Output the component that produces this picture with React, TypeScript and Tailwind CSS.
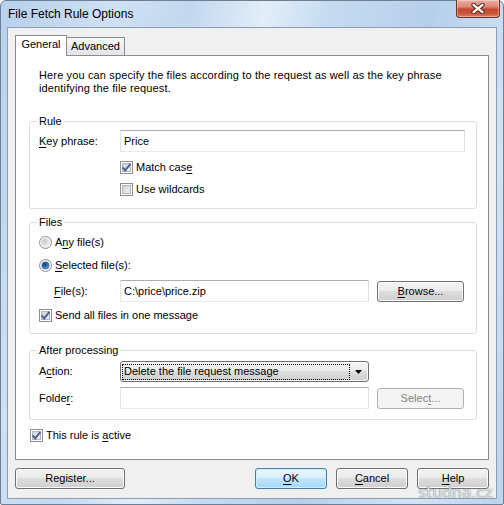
import React from 'react';

const FONT = "font-['Liberation_Sans',Arial,sans-serif]";

const btn =
  'flex items-center justify-center rounded-[3px] border border-[#707070] bg-[linear-gradient(to_bottom,#f2f2f2_0%,#ebebeb_50%,#dddddd_50%,#cfcfcf_100%)] shadow-[inset_0_0_0_1px_#fbfbfb]';

const field =
  'flex items-center border border-[#abadb3] border-l-[#e2e3ea] border-r-[#dbdfe6] border-b-[#e3e9ef] bg-white pl-[3px]';

function Key({ children }: { children: React.ReactNode }) {
  return <span className="underline underline-offset-[2px]">{children}</span>;
}

// shared gradients for the little drawn controls
function Defs() {
  return (
    <svg width="0" height="0" className="absolute">
      <defs>
        <linearGradient id="cbFill" x1="0" y1="0" x2="1" y2="1">
          <stop offset="0" stopColor="#c9ced6" />
          <stop offset="1" stopColor="#f6f7f8" />
        </linearGradient>
        <radialGradient id="rdFill" cx="0.3" cy="0.3" r="0.9">
          <stop offset="0" stopColor="#c4c8cd" />
          <stop offset="1" stopColor="#f5f5f5" />
        </radialGradient>
        <radialGradient id="rdDot" cx="0.4" cy="0.35" r="0.7">
          <stop offset="0" stopColor="#0e3f78" />
          <stop offset="0.6" stopColor="#2e78be" />
          <stop offset="1" stopColor="#7cc0ee" />
        </radialGradient>
      </defs>
    </svg>
  );
}

function CheckBox({ checked }: { checked?: boolean }) {
  return (
    <svg width="13" height="13" viewBox="0 0 13 13" className="shrink-0">
      <rect x="0.5" y="0.5" width="12" height="12" fill="#fff" stroke="#8e8f8f" />
      <rect x="2.5" y="2.5" width="8" height="8" fill="url(#cbFill)" stroke="#b0b5bc" />
      {checked && (
        <path d="M2.6 6.3 L5.2 9.4 L10.4 2.8" fill="none" stroke="#4a6190" strokeWidth="1.9" />
      )}
    </svg>
  );
}

function Radio({ selected }: { selected?: boolean }) {
  return (
    <svg width="13" height="13" viewBox="0 0 13 13" className="shrink-0">
      <circle cx="6.5" cy="6.5" r="6" fill="#f3f3f3" stroke="#8e8f8f" />
      <circle cx="6.5" cy="6.5" r="4.2" fill="url(#rdFill)" />
      {selected && <circle cx="6.5" cy="6.5" r="3.6" fill="url(#rdDot)" stroke="#1b4d86" strokeWidth="0.6" />}
    </svg>
  );
}

function Group({ title, className, children }: { title: string; className?: string; children: React.ReactNode }) {
  return (
    <fieldset className={`ml-[13px] w-[448px] rounded-[3px] border border-[#d5dfe5] ${className ?? ''}`}>
      <legend className="ml-[7px] px-[2px] leading-[13px]">{title}</legend>
      <div className="flex flex-col pl-[9px]">{children}</div>
    </fieldset>
  );
}

function CloseButton() {
  return (
    <div className="ml-auto mr-[3px] mt-[-1px] flex h-[18px] w-[44px] items-center justify-center rounded-b-[4px] border border-t-0 border-[#6e3128] bg-[linear-gradient(to_bottom,#eab0a2_0%,#dc8675_40%,#c4462c_55%,#cc563a_80%,#de7f63_100%)] shadow-[inset_0_0_0_1px_rgba(255,255,255,0.35)]">
      <svg width="14" height="11" viewBox="0 0 14 11">
        <path d="M2.5 1.8L11.5 9.2M11.5 1.8L2.5 9.2" stroke="#4d2019" strokeWidth="4.2" strokeLinecap="round" />
        <path d="M2.5 1.8L11.5 9.2M11.5 1.8L2.5 9.2" stroke="#ffffff" strokeWidth="2.3" strokeLinecap="round" />
      </svg>
    </div>
  );
}

export default function App() {
  return (
    <div className={`${FONT} relative h-[505px] w-[504px] overflow-hidden bg-white text-[11px] leading-[13px] text-black`}>
      <Defs />
      <div className="flex h-full w-full flex-col rounded-t-[6px] rounded-b-[2px] border border-[#6f7f93] bg-[linear-gradient(105deg,#b7d0ec_0%,#cfe0f3_18%,#c3d8ef_30%,#e2edf8_42%,#c6dbf1_52%,#b5cfeb_68%,#d3e3f5_85%,#bcd4ee_100%)]">
        {/* title bar */}
        <div className="flex h-[26px] shrink-0 items-start">
          <span className="pl-[7px] pt-[6px] text-[12px] leading-[15px]">File Fetch Rule Options</span>
          <CloseButton />
        </div>

        {/* client area */}
        <div className="mx-[6px] mb-[5px] flex flex-1 flex-col border border-[#8c9db3] bg-[#f0f0f0] px-[7px] pt-[7px]">
          {/* tabs */}
          <div className="flex h-[20px] items-end">
            <div className="relative z-10 mb-[-1px] flex h-[21px] w-[52px] justify-center border border-b-0 border-[#898c95] bg-white pt-[2px]">
              General
            </div>
            <div className="ml-[-1px] flex h-[18px] w-[59px] justify-center border border-b-0 border-[#898c95] bg-[linear-gradient(to_bottom,#f7f7f7,#e4e4e4)] pt-[2px]">
              Advanced
            </div>
          </div>

          {/* tab page */}
          <div className="flex h-[405px] w-[474px] flex-col border border-[#898c95] bg-white pt-[13px]">
            <p className="ml-[23px] whitespace-nowrap tracking-[0.14px]">
              Here you can specify the files according to the request as well as the key phrase
              <br />
              identifying the file request.
            </p>

            <Group title="Rule" className="mt-[20px] pb-[12px]">
              <div className="mt-[2px] flex h-[22px] items-center">
                <span className="w-[81px]">
                  <Key>K</Key>ey phrase:
                </span>
                <div className={`${field} h-[22px] w-[345px]`}>Price</div>
              </div>
              <div className="mt-[9px] flex h-[13px] items-center gap-[3px] pl-[81px]">
                <CheckBox checked />
                <span>
                  Match cas<Key>e</Key>
                </span>
              </div>
              <div className="mt-[9px] flex h-[13px] items-center gap-[3px] pl-[81px]">
                <CheckBox />
                <span>Use wildcards</span>
              </div>
            </Group>

            <Group title="Files" className="mt-[7px] pb-[11px]">
              <div className="mt-[7px] flex h-[13px] items-center gap-[3px]">
                <Radio />
                <span>
                  A<Key>n</Key>y file(s)
                </span>
              </div>
              <div className="mt-[10px] flex h-[13px] items-center gap-[3px]">
                <Radio selected />
                <span>
                  <Key>S</Key>elected file(s):
                </span>
              </div>
              <div className="mt-[8px] flex h-[22px] items-center">
                <span className="ml-[15px] w-[66px]">
                  <Key>F</Key>ile(s):
                </span>
                <div className={`${field} h-[22px] w-[249px]`}>{'C:\\price\\price.zip'}</div>
                <button className={`${btn} ml-[8px] h-[21px] w-[87px] self-end`}>
                  <span>
                    <Key>B</Key>rowse...
                  </span>
                </button>
              </div>
              <div className="mt-[7px] flex h-[13px] items-center gap-[3px]">
                <CheckBox checked />
                <span>Send all files in one message</span>
              </div>
            </Group>

            <Group title="After processing" className="mt-[10px] pb-[10px]">
              <div className="mt-[4px] flex h-[21px] items-center">
                <span className="w-[81px]">
                  A<Key>c</Key>tion:
                </span>
                <div className={`${btn} h-[21px] w-[249px] !justify-start pl-[1px] pr-[6px]`}>
                  <span className="flex h-[16px] w-[228px] items-center border border-dotted border-black pl-[1px]">
                    Delete the file request message
                  </span>
                  <svg width="7" height="4" viewBox="0 0 7 4" className="ml-auto">
                    <path d="M0 0H7L3.5 4Z" fill="#000" />
                  </svg>
                </div>
              </div>
              <div className="mt-[5px] flex h-[22px] items-center">
                <span className="w-[81px]">
                  Folde<Key>r</Key>:
                </span>
                <div className={`${field} h-[22px] w-[249px]`} />
                <button className="ml-[8px] flex h-[21px] w-[87px] items-center justify-center self-end rounded-[3px] border border-[#adb2b5] bg-[#f4f4f4] text-[#838383]">
                  <span>
                    Selec<Key>t</Key>...
                  </span>
                </button>
              </div>
            </Group>

            <div className="ml-[14px] mt-[9px] flex h-[13px] items-center gap-[3px]">
              <CheckBox checked />
              <span>
                This rule is <Key>a</Key>ctive
              </span>
            </div>
          </div>

          {/* dialog buttons */}
          <div className="mt-[8px] flex h-[21px] items-center">
            <button className={`${btn} h-[21px] w-[110px]`}>Register...</button>
            <div className="ml-auto flex gap-[9px]">
              <button className="flex h-[21px] w-[72px] items-center justify-center rounded-[3px] border border-[#3c7fb1] bg-[linear-gradient(to_bottom,#eaf6fd_0%,#d9f0fc_50%,#bee6fd_50%,#a7d9f5_100%)] shadow-[inset_0_0_0_1px_#d3edfb]">
                <span>
                  <Key>O</Key>K
                </span>
              </button>
              <button className={`${btn} h-[21px] w-[72px]`}>
                <span>
                  <Key>C</Key>ancel
                </span>
              </button>
              <button className={`${btn} h-[21px] w-[72px]`}>
                <span>
                  <Key>H</Key>elp
                </span>
              </button>
            </div>
          </div>
        </div>
      </div>

      {/* site watermark */}
      <span className="pointer-events-none absolute right-[11px] top-[486px] font-['DejaVu_Sans',sans-serif] text-[15.5px] leading-none text-[#dfe3e7] [text-shadow:0_0_1px_#7f8b98,0_0_1px_#7f8b98]">
        studna.cz
      </span>
    </div>
  );
}
